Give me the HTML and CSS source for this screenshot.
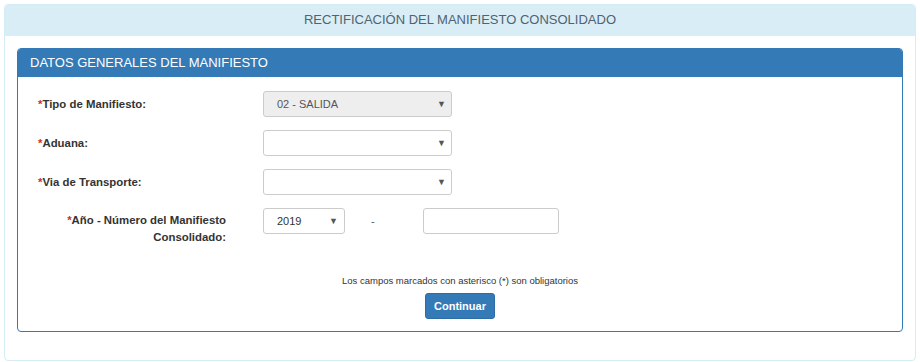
FILE: index.html
```html
<!DOCTYPE html>
<html lang="es">
<head>
<meta charset="utf-8">
<title>Rectificación del Manifiesto Consolidado</title>
<link rel="stylesheet" href="styles.css">
</head>
<body>
<div class="outer">
  <div class="outer-head">RECTIFICACIÓN DEL MANIFIESTO CONSOLIDADO</div>
  <div class="outer-body">
    <div class="panel">
      <div class="panel-head">DATOS GENERALES DEL MANIFIESTO</div>
      <div class="panel-body">
        <div class="row">
          <label class="lbl"><span class="req">*</span>Tipo de Manifiesto:</label>
          <div class="sel sel-wide disabled"><span class="val">02 - SALIDA</span><span class="arrow">▼</span></div>
        </div>
        <div class="row">
          <label class="lbl"><span class="req">*</span>Aduana:</label>
          <div class="sel sel-wide"><span class="val"></span><span class="arrow">▼</span></div>
        </div>
        <div class="row">
          <label class="lbl"><span class="req">*</span>Via de Transporte:</label>
          <div class="sel sel-wide"><span class="val"></span><span class="arrow">▼</span></div>
        </div>
        <div class="row row-last">
          <label class="lbl lbl-right"><span class="req">*</span>Año - Número del Manifiesto<br>Consolidado:</label>
          <div class="sel sel-year"><span class="val">2019</span><span class="arrow">▼</span></div>
          <span class="dash">-</span>
          <input class="txt" type="text">
        </div>
        <div class="foot">
          <p class="note">Los campos marcados con asterisco (*) son obligatorios</p>
          <button class="btn" type="button">Continuar</button>
        </div>
      </div>
    </div>
  </div>
</div>
</body>
</html>
```

FILE: styles.css
```css
* { box-sizing: border-box; }
html, body { margin: 0; padding: 0; background: #fff; }
body {
  padding: 4px 4px 0 4px;
  font-family: Arial, "Liberation Sans", Helvetica, sans-serif;
  color: #333;
}
.outer {
  width: 912px;
  border: 1px solid #d4ecf3;
  border-radius: 4px;
  background: #fff;
}
.outer-head {
  height: 31px;
  background: #d9edf7;
  color: #4f6370;
  font-size: 13px;
  line-height: 30px;
  text-align: center;
  border-radius: 3px 3px 0 0;
}
.outer-body {
  padding: 12px 12px 28px 12px;
}
.panel {
  border: 1px solid #337ab7;
  border-radius: 4px;
}
.panel-head {
  height: 28px;
  background: #337ab7;
  color: #fff;
  font-size: 13px;
  line-height: 28px;
  padding-left: 12px;
  border-radius: 3px 3px 0 0;
}
.panel-body {
  padding: 14px 0 12px 20px;
}
.row {
  display: flex;
  align-items: center;
  height: 26px;
  margin-bottom: 13px;
}
.row-last {
  align-items: flex-start;
  height: 39px;
  margin-bottom: 28px;
}
.lbl {
  width: 225px;
  flex: none;
  font-size: 11.4px;
  font-weight: bold;
  color: #333;
  line-height: 17px;
}
.lbl-right {
  width: 188px;
  margin-right: 37px;
  text-align: right;
  padding-top: 4px;
}
.req { color: #c9302c; }
.sel {
  position: relative;
  height: 26px;
  border: 1px solid #ccc;
  border-radius: 3px;
  background: #fff;
  font-size: 11px;
  color: #555;
  line-height: 24px;
  padding-left: 13px;
}
.sel.disabled { background: #eee; }
.sel-wide { width: 189px; }
.sel-year { width: 82px; padding-left: 13px; color: #333; }
.arrow {
  position: absolute;
  right: 5px;
  top: 0;
  font-size: 9px;
  color: #555;
}
.sel-year .arrow { right: 6px; }
.dash {
  margin-left: 26px;
  width: 52px;
  font-size: 11px;
  line-height: 26px;
  color: #555;
}
.txt {
  width: 136px;
  height: 26px;
  border: 1px solid #ccc;
  border-radius: 3px;
  margin: 0;
}
.foot {
  display: flex;
  flex-direction: column;
  align-items: center;
  margin-left: -20px;
}
.note {
  margin: 0 0 6px 0;
  font-size: 9.5px;
  color: #333;
  line-height: 12px;
}
.btn {
  width: 70px;
  height: 26px;
  background: #337ab7;
  border: 1px solid #2e6da4;
  border-radius: 3px;
  color: #fff;
  font-family: Arial, "Liberation Sans", sans-serif;
  font-size: 11px;
  font-weight: bold;
  padding: 0;
}
```
